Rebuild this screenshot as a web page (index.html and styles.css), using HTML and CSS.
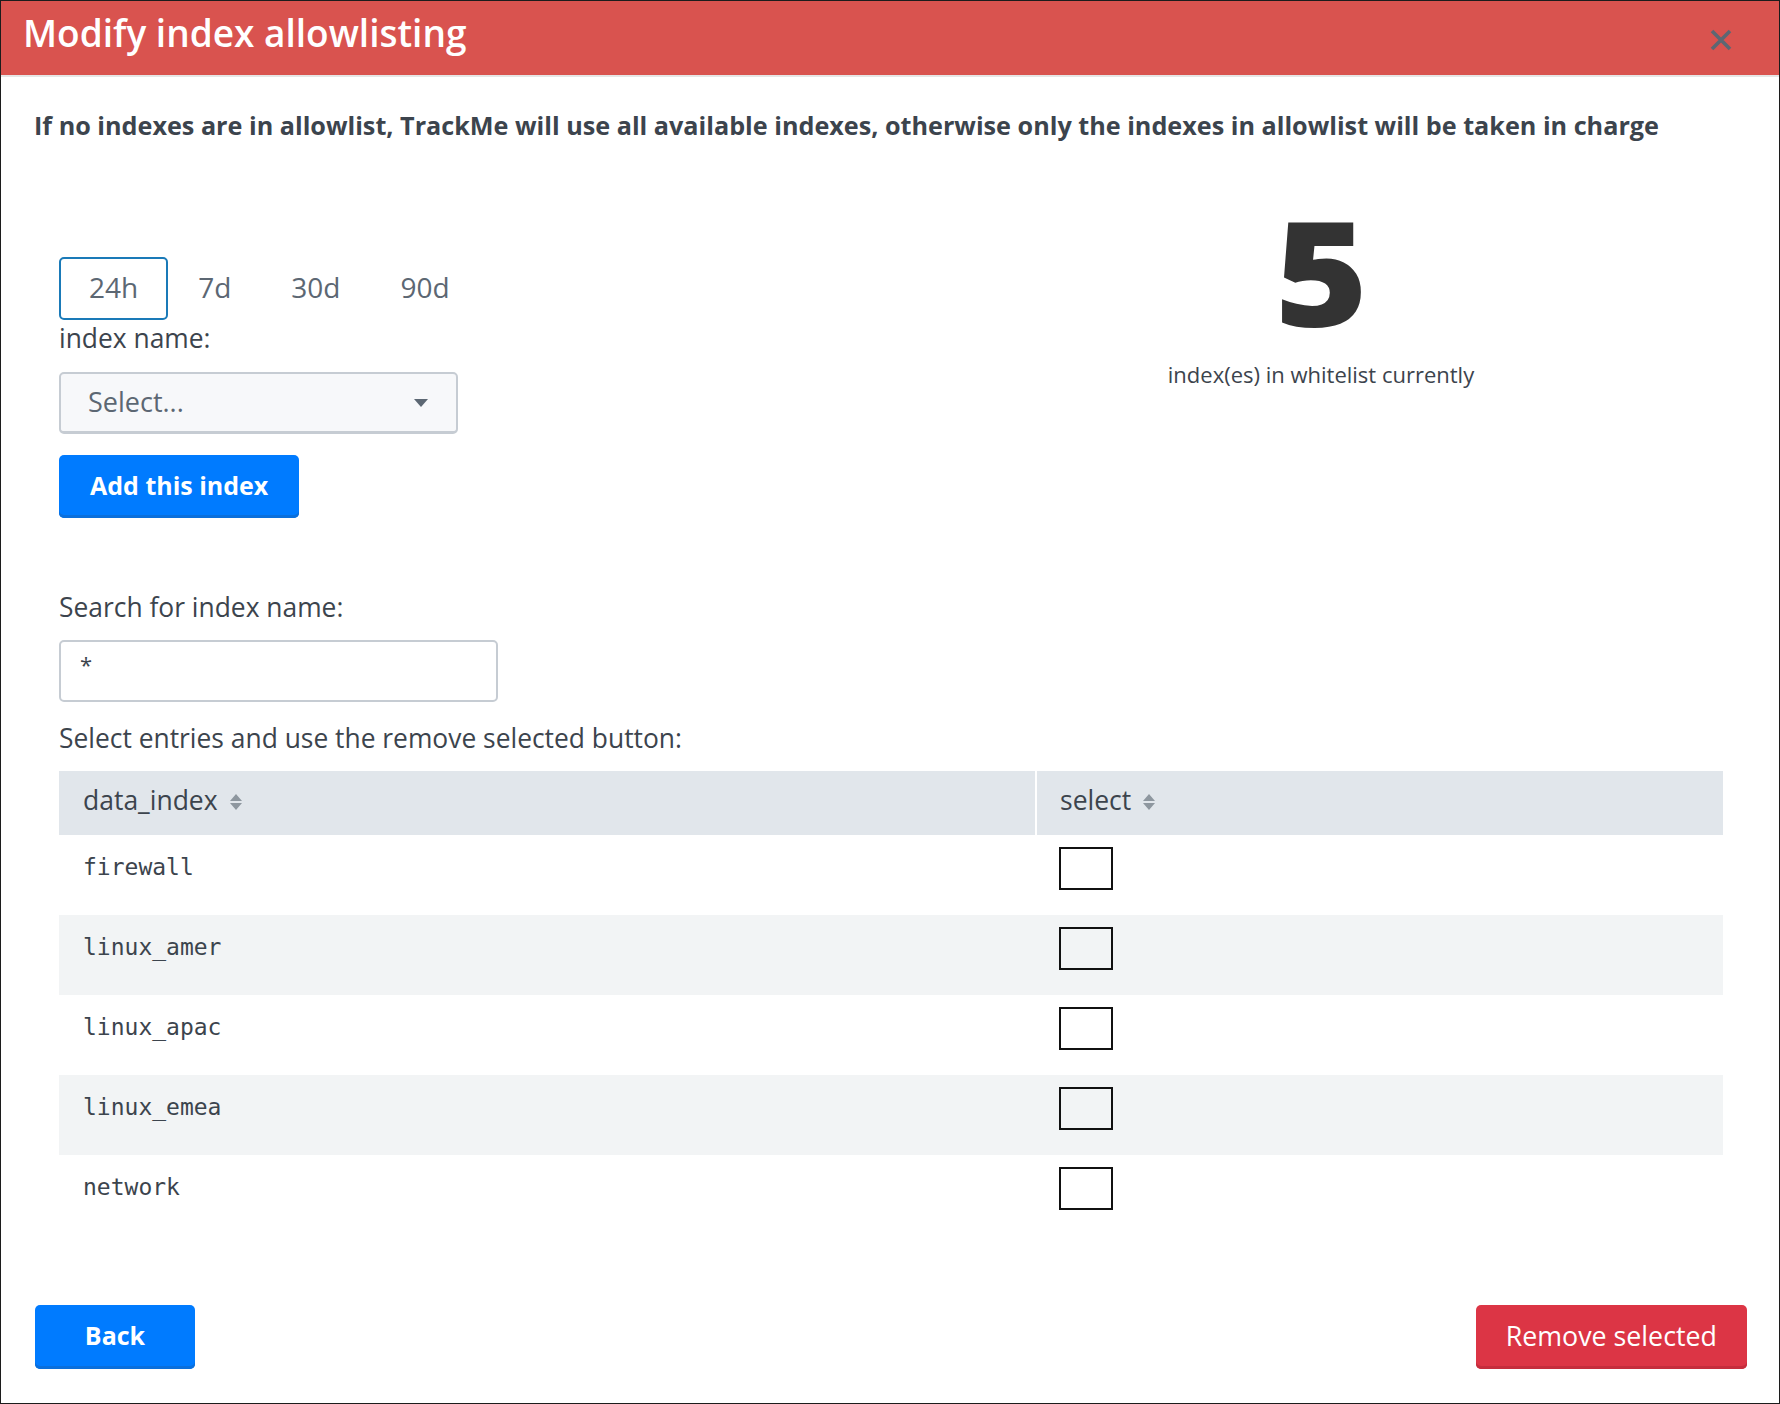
FILE: index.html
```html
<!DOCTYPE html>
<html lang="en">
<head>
<meta charset="utf-8">
<title>Modify index allowlisting</title>
<link rel="stylesheet" href="styles.css">
</head>
<body>
<div class="modal">
  <header class="modal-header">
    <h1 class="modal-title">Modify index allowlisting</h1>
    <button class="close-btn" aria-label="Close">
      <svg width="22" height="22" viewBox="0 0 22 22"><path d="M2 2 L20 20 M20 2 L2 20" stroke="#5c6773" stroke-width="3.6" fill="none"/></svg>
    </button>
  </header>

  <div class="modal-body">
    <p class="intro">If no indexes are in allowlist, TrackMe will use all available indexes, otherwise only the indexes in allowlist will be taken in charge</p>

    <div class="content">
      <div class="top-row">
        <div class="left-col">
          <div class="tabs">
            <span class="tab active">24h</span>
            <span class="tab">7d</span>
            <span class="tab">30d</span>
            <span class="tab">90d</span>
          </div>
          <div class="label">index name:</div>
          <div class="select">
            <span>Select...</span>
            <svg class="caret" width="14" height="8" viewBox="0 0 14 8"><path d="M0 0 H14 L7 8 Z" fill="#5c6773"/></svg>
          </div>
          <button class="btn btn-primary btn-add">Add this index</button>
        </div>
        <div class="right-col">
          <div class="big-num"><span>5</span></div>
          <div class="big-caption">index(es) in whitelist currently</div>
        </div>
      </div>

      <div class="label label-search">Search for index name:</div>
      <input class="search" type="text" value="*">
      <div class="label label-select">Select entries and use the remove selected button:</div>

      <table class="grid">
        <thead>
          <tr>
            <th class="col-index">data_index <svg class="sort" width="14" height="20" viewBox="0 0 14 20"><path d="M1 9 L7 2 L13 9 Z M1 11 L13 11 L7 18 Z" fill="#8e979f"/></svg></th>
            <th class="col-select">select <svg class="sort" width="14" height="20" viewBox="0 0 14 20"><path d="M1 9 L7 2 L13 9 Z M1 11 L13 11 L7 18 Z" fill="#8e979f"/></svg></th>
          </tr>
        </thead>
        <tbody>
          <tr><td class="cell-name">firewall</td><td class="cell-cb"><input type="checkbox" class="cb"></td></tr>
          <tr><td class="cell-name">linux_amer</td><td class="cell-cb"><input type="checkbox" class="cb"></td></tr>
          <tr><td class="cell-name">linux_apac</td><td class="cell-cb"><input type="checkbox" class="cb"></td></tr>
          <tr><td class="cell-name">linux_emea</td><td class="cell-cb"><input type="checkbox" class="cb"></td></tr>
          <tr><td class="cell-name">network</td><td class="cell-cb"><input type="checkbox" class="cb"></td></tr>
        </tbody>
      </table>
    </div>
  </div>

  <footer class="modal-footer">
    <button class="btn btn-primary btn-back">Back</button>
    <button class="btn btn-danger">Remove selected</button>
  </footer>
</div>
</body>
</html>
```

FILE: styles.css
```css
* { box-sizing: border-box; }

html, body {
  margin: 0;
  padding: 0;
  background: #fff;
}

body {
  font-family: "Open Sans", "Liberation Sans", sans-serif;
  color: #3c444d;
}

.modal {
  width: 1780px;
  height: 1404px;
  border: 1px solid #1c1c1c;
  display: flex;
  flex-direction: column;
  background: #fff;
}

.modal-header {
  display: flex;
  justify-content: space-between;
  align-items: flex-start;
  background: #d9534f;
  height: 76px;
  padding: 0 47px 10px 22px;
  border-bottom: 2px solid #e6e6e6;
}

.modal-title {
  margin: 0;
  font-size: 37px;
  font-weight: 600;
  line-height: 64px;
  color: #fff;
}

.close-btn {
  margin-top: 28px;
  padding: 0;
  border: 0;
  background: transparent;
  width: 22px;
  height: 22px;
  display: block;
}
.close-btn svg { display: block; }

.modal-body {
  padding: 31px 34px 0 33px;
}

.intro {
  margin: 0;
  font-size: 25.2px;
  font-weight: 700;
  line-height: 34px;
  color: #3c444d;
}

.content {
  padding: 0 22px 0 25px;
}

.top-row {
  display: grid;
  grid-template-columns: 1fr 1fr;
  margin-top: 56px;
}

.left-col {
  padding-top: 59px;
}

.tabs {
  display: flex;
}

.tab {
  height: 63px;
  line-height: 57px;
  padding: 0 28px;
  border: 2px solid transparent;
  border-radius: 5px;
  font-size: 28px;
  color: #5c6773;
}
.tab.active {
  border-color: #1a7ab8;
}

.label {
  font-size: 26.4px;
  line-height: 36px;
  color: #3c444d;
}

.select {
  margin-top: 16px;
  width: 399px;
  height: 62px;
  display: flex;
  align-items: center;
  justify-content: space-between;
  padding: 0 28px 3px 27px;
  background: #f7f8fa;
  border: 2px solid #c6ccd3;
  border-bottom-width: 3px;
  border-radius: 5px;
  font-size: 27px;
  color: #5c6773;
}
.select .caret {
  margin-top: 3px;
}

.btn {
  font-family: "Open Sans", "Liberation Sans", sans-serif;
  border: 0;
  border-radius: 5px;
  color: #fff;
  height: 64px;
  padding: 0 31px 4px;
  font-size: 25px;
  cursor: pointer;
}

.btn-primary {
  background: #007bff;
  box-shadow: inset 0 -3px 0 #0a6fdc;
  font-weight: 700;
}

.btn-danger {
  background: #dc3545;
  box-shadow: inset 0 -3px 0 #c52d3c;
  font-weight: 400;
  font-size: 26.8px;
  padding: 0 30px 4px;
}

.btn-add {
  display: block;
  margin-top: 21px;
  height: 63px;
}

.right-col {
  padding-left: 28px;
  text-align: center;
}

.big-num {
  height: 145px;
}
.big-num span {
  display: inline-block;
  font-size: 145px;
  line-height: 145px;
  font-weight: 800;
  color: #333;
  transform: scaleX(1.1);
}

.big-caption {
  margin-top: 16px;
  font-size: 22px;
  line-height: 30px;
  color: #3c444d;
}

.label-search {
  margin-top: 71px;
}

.search {
  display: block;
  margin-top: 15px;
  width: 439px;
  height: 62px;
  border: 2px solid #c6ccd3;
  border-radius: 5px;
  padding: 0 19px 14px;
  font-family: "Open Sans", "Liberation Sans", sans-serif;
  font-size: 22px;
  color: #3c444d;
  background: #fff;
}

.label-select {
  margin-top: 18px;
}

.grid {
  margin-top: 15px;
  width: 100%;
  border-collapse: separate;
  border-spacing: 0;
}

.grid th {
  height: 64px;
  padding: 0 24px 6px;
  line-height: 58px;
  font-size: 26.5px;
  font-weight: 400;
  text-align: left;
  background: #e1e6eb;
  color: #3c444d;
  white-space: nowrap;
}

.grid th.col-index {
  width: 978px;
  border-right: 2px solid #fff;
}

.grid th.col-select {
  padding-left: 23px;
}

.sort {
  vertical-align: -2px;
  margin-left: 4px;
}

.grid td {
  height: 80px;
  vertical-align: top;
}

.grid tbody tr:nth-child(even) td {
  background: #f2f4f5;
}

.cell-name {
  padding: 17px 24px 0;
  font-family: "DejaVu Sans Mono", "Liberation Mono", monospace;
  font-size: 23px;
  line-height: 30px;
  color: #3c444d;
}

.cell-cb {
  padding: 12px 22px 0;
}

.cb {
  -webkit-appearance: none;
  appearance: none;
  display: block;
  margin: 0;
  width: 54px;
  height: 43px;
  border: 2px solid #111;
  border-radius: 0;
  background: transparent;
}

.modal-footer {
  margin-top: auto;
  display: flex;
  justify-content: space-between;
  align-items: flex-end;
  padding: 0 32px 34px 34px;
}

.btn-back {
  min-width: 160px;
}
```
